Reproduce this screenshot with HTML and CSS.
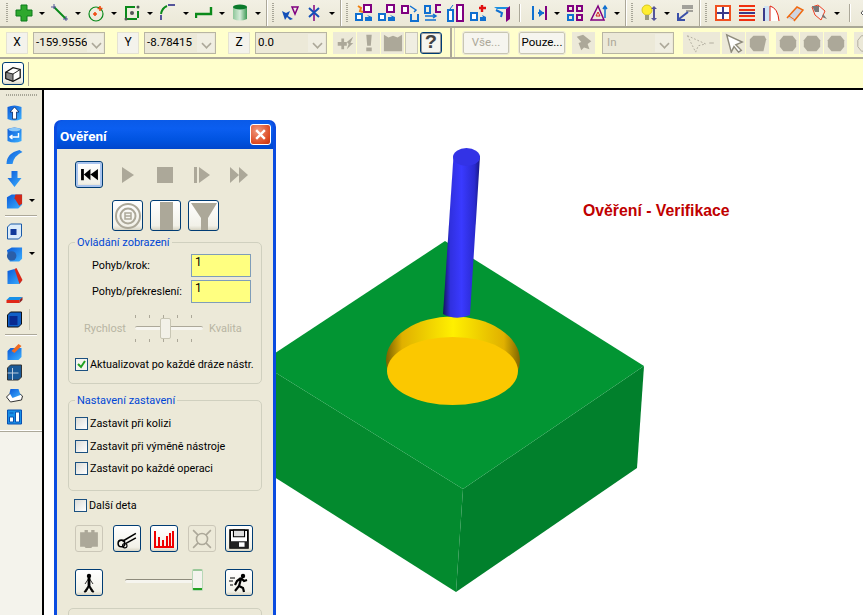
FILE: index.html
```html
<!DOCTYPE html>
<html lang="cs">
<head>
<meta charset="utf-8">
<title>Ověření</title>
<link rel="stylesheet" href="styles.css">
</head>
<body>
<div class="app">
  <div class="bar bar1">
    <span class="grip"></span>
    <span class="tb"><svg viewBox="0 0 18 18"><path d="M6 1h6v5h5v6h-5v5H6v-5H1V6h5z" fill="#2ea82e" stroke="#0b7a1a"/></svg></span><span class="arr"></span>
    <span class="tb"><svg viewBox="0 0 18 18"><path d="M3 3l12 12" stroke="#0a8a1a" stroke-width="2"/><path d="M3 0v5M0 3h5M15 12v5M12 15h5" stroke="#55559a"/></svg></span><span class="arr"></span>
    <span class="tb"><svg viewBox="0 0 18 18"><circle cx="9" cy="10" r="7" fill="none" stroke="#0a8a1a" stroke-width="1.2"/><path d="M8 8v4M6 10h4M13 2v5M10.5 4.500h5" stroke="#f04a10" stroke-width="1.600"/></svg></span><span class="arr"></span>
    <span class="tb"><svg viewBox="0 0 18 18"><path d="M3 2v13h11" fill="none" stroke="#0a8a1a" stroke-width="2"/><path d="M3 3h9M15 7v7" stroke="#0a8a1a" stroke-width="2"/><circle cx="9" cy="9" r="2" fill="#555"/><circle cx="15" cy="3" r="1.500" fill="#555"/><circle cx="3" cy="15" r="1.500" fill="#555"/></svg></span><span class="arr"></span>
    <span class="tb"><svg viewBox="0 0 18 18"><path d="M2 16V11" stroke="#55559a" stroke-width="2"/><path d="M2 10Q3 4 8 2" fill="none" stroke="#0a8a1a" stroke-width="2"/><path d="M9 1h7" stroke="#55559a" stroke-width="2"/></svg></span><span class="arr"></span>
    <span class="tb"><svg viewBox="0 0 18 18"><path d="M1 14v-4h15V3" fill="none" stroke="#0a8a1a" stroke-width="2.400"/></svg></span><span class="arr"></span>
    <span class="tb"><svg viewBox="0 0 18 18"><defs><linearGradient id="cy"><stop offset="0" stop-color="#8fc79a"/><stop offset=".5" stop-color="#d5ebd8"/><stop offset="1" stop-color="#3f9a55"/></linearGradient></defs><path d="M2 3v12q7 3 14 0V3z" fill="url(#cy)"/><ellipse cx="9" cy="3" rx="7" ry="2.500" fill="#0a7a2a"/></svg></span><span class="arr"></span>
    <span class="sep"></span><span class="grip"></span>
    <span class="tb"><svg viewBox="0 0 18 18"><path d="M1 7l4 2 4-2-2 5 5 3-3 1-3-3-2 3z" fill="#1450b8"/><path d="M11 3l6 0-3 7z" fill="none" stroke="#800080" stroke-width="1.500"/></svg></span>
    <span class="tb"><svg viewBox="0 0 18 18"><path d="M9 1v16" stroke="#800080" stroke-width="1.500"/><path d="M4 4l10 9M14 4L4 13" stroke="#1450b8" stroke-width="2"/></svg></span><span class="arr"></span>
    <span class="sep"></span><span class="grip"></span>
    <span class="tb narrow"><svg viewBox="0 0 18 18"><path d="M9 1h7v7H9z" fill="#fff" stroke="#800080" stroke-width="2"/><path d="M1 10h6v6H1z" fill="#fff" stroke="#1070d0" stroke-width="2"/><path d="M3 2l3 2-1 3 3 1" fill="none" stroke="#f08010" stroke-width="2"/><path d="M10 17v-4h4l-2-2 5 2v4" fill="#1070d0"/></svg></span>
    <span class="tb narrow"><svg viewBox="0 0 18 18"><path d="M9 1h7v7H9z" fill="#fff" stroke="#800080" stroke-width="2"/><path d="M1 10h6v6H1z" fill="#fff" stroke="#1070d0" stroke-width="2"/><path d="M10 17v-4h4l-2-2 5 2v4" fill="#1070d0"/></svg></span>
    <span class="tb narrow"><svg viewBox="0 0 18 18"><path d="M1 2h6v7H1z" fill="#fff" stroke="#800080" stroke-width="2"/><path d="M10 10v7h7v-7" fill="none" stroke="#1070d0" stroke-width="2"/><path d="M9 2l6 4-2 2" fill="none" stroke="#1070d0" stroke-width="1.500"/></svg></span>
    <span class="tb narrow"><svg viewBox="0 0 18 18"><path d="M1 2h5v7H1z" fill="none" stroke="#1070d0" stroke-width="2"/><path d="M17 1h-5v7h5" fill="none" stroke="#800080" stroke-width="2"/><path d="M1 12h11M9 10l3 2-3 2M1 16h11" stroke="#1070d0" stroke-width="1.500" fill="none"/></svg></span>
    <span class="tb narrow"><svg viewBox="0 0 18 18"><path d="M1 6h5v11H1z" fill="#fff" stroke="#1070d0" stroke-width="2"/><path d="M10 1h6v16h-6z" fill="#fff" stroke="#800080" stroke-width="2"/><path d="M3 5l3-4" stroke="#1070d0"/></svg></span>
    <span class="tb narrow"><svg viewBox="0 0 18 18"><path d="M1 9h6v7H1z" fill="#fff" stroke="#1070d0" stroke-width="2"/><path d="M12 1v7M9 4h7" stroke="#e01010" stroke-width="2.400"/><path d="M10 17v-4h3l-1-2 4 2v4" fill="#1070d0"/></svg></span>
    <span class="tb narrow"><svg viewBox="0 0 18 18"><path d="M1 3h15l-3 2H4z" fill="#1b8fe0"/><path d="M13 5l4-3v13l-4 3z" fill="#800080"/><path d="M3 6l6 3-1 4" fill="none" stroke="#1070d0" stroke-width="2"/></svg></span>
    <span class="sep dim"></span>
    <span class="tb"><svg viewBox="0 0 18 18"><path d="M3 2v14M8 9H14" stroke="#1070d0" stroke-width="2"/><path d="M9 5l5 4-5 4z" fill="#1070d0"/><path d="M16 2v14" stroke="#800080" stroke-width="2"/></svg></span><span class="arr"></span>
    <span class="tb"><svg viewBox="0 0 18 18"><path d="M2 2h5v5H2z" fill="none" stroke="#800080" stroke-width="2"/><path d="M11 2h5v5h-5z" fill="none" stroke="#800080" stroke-width="2"/><path d="M2 11h5v5H2z" fill="none" stroke="#1070d0" stroke-width="2"/><path d="M11 11h5v5h-5z" fill="none" stroke="#800080" stroke-width="2"/></svg></span>
    <span class="tb"><svg viewBox="0 0 18 18"><path d="M8 2L1 16h13z" fill="none" stroke="#800080" stroke-width="1.500"/><path d="M15 2v12M13 5l2-3 2 3" fill="none" stroke="#1070d0" stroke-width="1.500"/><path d="M6 12h4l-2-4z" fill="none" stroke="#d02020"/></svg></span><span class="arr"></span>
    <span class="sep"></span><span class="grip"></span>
    <span class="tb"><svg viewBox="0 0 18 18"><circle cx="7" cy="6" r="5" fill="#ffee30" stroke="#d8c820"/><path d="M5 11h4v5H5z" fill="#9a9a80"/><path d="M14 2l-3 3h6zM14 17l-3-3h6zM13 5h2v9h-2z" fill="#55559a"/></svg></span><span class="arr"></span>
    <span class="tb"><svg viewBox="0 0 18 18"><path d="M6 2h11M6 4h11M10 7h7" stroke="#555" /><path d="M12 8L3 15M2 9v7h7" fill="none" stroke="#3a50a8" stroke-width="2"/></svg></span>
    <span class="sep"></span><span class="grip"></span>
    <span class="tb"><svg viewBox="0 0 18 18"><path d="M2 2h14v14H2z" fill="#fff" stroke="#f05020" stroke-width="2"/><path d="M3 9h12M9 3v12" stroke="#3a3a8a" stroke-width="2"/></svg></span>
    <span class="tb"><svg viewBox="0 0 18 18"><path d="M1 2h16M1 6h16M1 12h16M1 16h16" stroke="#f03010" stroke-width="2"/><path d="M1 9h16" stroke="#3a3a8a" stroke-width="2"/></svg></span>
    <span class="tb"><svg viewBox="0 0 18 18"><path d="M2 17V2h4q8 2 10 15z" fill="#cfe4f5"/><path d="M8 17V2q8 2 9 15" fill="#fff" stroke="#e02010"/><path d="M2 17V4" stroke="#3a3a8a" stroke-width="2"/></svg></span>
    <span class="tb"><svg viewBox="0 0 18 18"><path d="M1 14L11 3l6 3-9 11" fill="#cfd4e0" stroke="#f06a10" stroke-width="1.500"/><path d="M3 12l6 4" stroke="#f06a10"/></svg></span>
    <span class="tb"><svg viewBox="0 0 18 18"><path d="M2 3l6-2 7 6-4 9-6-5z" fill="#eee" stroke="#f04020"/><path d="M2 2h7v6H5z" fill="#777"/><path d="M13 10l4 5-5-2z" fill="#777"/></svg></span><span class="arr"></span>
    <span class="sep dim"></span>
    <span class="tb"><svg viewBox="0 0 18 18"><path d="M1 9l7-8 8 4v9l-7 3z" fill="#fff" stroke="#555"/><path d="M6 4h8v8H6z" fill="none" stroke="#e02010"/></svg></span>
  </div>

  <div class="bar bar2">
    <span class="coord">X</span><span class="combo"><span class="val">-159.9556</span><span class="drop"></span></span>
    <span class="coord">Y</span><span class="combo"><span class="val">-8.78415</span><span class="drop"></span></span>
    <span class="coord">Z</span><span class="combo"><span class="val">0.0</span><span class="drop"></span></span>
    <span class="gtb g1"><svg viewBox="0 0 22 22"><path d="M7 6v4H3v4h4v4h3v-4h3v-4h-3V6z M13 10l7-6-3 7 3 0-7 7 2-6z" fill="#aca899"/></svg></span>
    <span class="gtb"><svg viewBox="0 0 22 22"><path d="M8 2h6l-1 12H9zM8 16h6v4H8z" fill="#aca899"/></svg></span>
    <span class="gtb wide"><svg viewBox="0 0 22 22"><path d="M1 2l5 3 5-2 5 2 5-3v18H1z" fill="#aca899"/></svg></span><span class="spin"></span>
    <span class="help">?</span>
    <span class="vgrip"></span>
    <span class="pbtn off">Vše...</span>
    <span class="pbtn">Pouze...</span>
    <span class="gtb g2"><svg viewBox="0 0 22 22"><path d="M3 4l7-2 9 7-4 3 2 6-6-2-3 3-3-8 3-1z" fill="#aca899"/></svg></span>
    <span class="combo unit"><span class="val off">In</span><span class="drop"></span></span>
    <span class="gtb pale"><svg viewBox="0 0 36 22"><path d="M2 3l20 9-8 2-3 7z" fill="none" stroke="#aca899" stroke-dasharray="2 2"/><path d="M26 11h5" stroke="#aca899"/></svg></span>
    <span class="gtb"><svg viewBox="0 0 22 22"><path d="M3 2l17 8-7 3 6 6-3 2-5-6-3 6z" fill="#fff" stroke="#8e8b7c" stroke-width="1.600"/></svg></span>
    <span class="gtb"><svg viewBox="0 0 22 22"><path d="M6 3h12l2 4-3 13H6l-4-5V7z" fill="#aca899"/></svg></span>
    <span class="gtb g3"><svg viewBox="0 0 22 22"><path d="M6 3h10l4 5v7l-4 5H6l-4-5V8z" fill="#aca899"/></svg></span>
    <span class="gtb"><svg viewBox="0 0 22 22"><path d="M6 3h10l4 5v7l-4 5H6l-4-5V8z" fill="#aca899"/></svg></span>
    <span class="gtb"><svg viewBox="0 0 22 22"><path d="M6 3h10l4 5v7l-4 5H6l-4-5V8z" fill="#aca899"/></svg></span>
    <span class="gtb g3"><svg viewBox="0 0 22 22"><path d="M6 3h10l4 5v7l-4 5H6l-4-5V8z" fill="none" stroke="#aca899"/></svg></span>
  </div>

  <div class="bar bar3">
    <span class="xpbtn"><svg viewBox="0 0 20 20"><path d="M2 8l8-5 8 2v9l-8 4-8-3z" fill="#fff" stroke="#111" stroke-width="1.400"/><path d="M2 8l8 2v8l-8-3z" fill="#888" stroke="#111"/><path d="M10 10l8-5" stroke="#111"/></svg></span>
    <span class="vline"></span>
  </div>

  <div class="work">
    <aside class="side">
      <div class="sidetools">
        <span class="sgrip"></span>
        <span class="st"><svg viewBox="0 0 16 18"><defs><linearGradient id="sb" x1="0" y1="0" x2="1" y2="1"><stop offset="0" stop-color="#0a58d8"/><stop offset="1" stop-color="#3cb0ff"/></linearGradient></defs><path d="M1 3q7-3 14 0v12q-7 3-14 0z" fill="url(#sb)"/><path d="M8 3l4.500 5H10v7H6V8H3.500z" fill="#fff" stroke="#0a2a60" stroke-width=".8"/></svg></span>
        <span class="st"><svg viewBox="0 0 16 18"><path d="M1 3q7-3 14 0v12q-7 3-14 0z" fill="url(#sb)"/><ellipse cx="8" cy="3.500" rx="6" ry="1.800" fill="#8cc8f8"/><path d="M3 11h9V7M3 11l3-2M3 11l3 2" fill="none" stroke="#fff" stroke-width="1.400"/></svg></span>
        <span class="st"><svg viewBox="0 0 16 18"><path d="M0 16q0-11 13-14l3 2Q7 8 6 16z" fill="url(#sb)"/></svg></span>
        <span class="st"><svg viewBox="0 0 16 18"><path d="M5 1h6v7h4l-7 9-7-9h4z" fill="url(#sb)"/></svg></span>
        <span class="st more"><svg viewBox="0 0 18 18"><path d="M1 5l5-3h11v11l-4 4H1z" fill="url(#sb)"/><path d="M10 2h7v10l-3 2-5-8z" fill="#d02818"/></svg></span>
        <span class="shr"></span>
        <span class="st"><svg viewBox="0 0 16 18"><path d="M1 4l3-3h11v12l-3 3H1z" fill="#dcecfa" stroke="#1a5aa8"/><path d="M4 6h6v6H4z" fill="#123a9a"/></svg></span>
        <span class="st more"><svg viewBox="0 0 18 18"><path d="M1 5l5-3h11v12l-3 3H4z" fill="url(#sb)"/><circle cx="6" cy="11" r="5" fill="#2a5ea8"/></svg></span>
        <span class="st"><svg viewBox="0 0 16 18"><path d="M1 4l7-2 7 12-2 3H1z" fill="url(#sb)"/><path d="M8 2l2-1 6 12-3 4z" fill="#d82818"/></svg></span>
        <span class="st"><svg viewBox="0 0 16 18"><path d="M3 8h13l-3 3H0z" fill="#1890e8"/><path d="M0 11h13v3H0z" fill="#e02818"/><path d="M13 11l3-3v3l-3 3z" fill="#902020"/></svg></span>
        <span class="st flag"><svg viewBox="0 0 16 18"><path d="M1 4l3-3h11v12l-3 3H1z" fill="#1060c8" stroke="#111"/><path d="M3 5h8v9H3z" fill="#082a90"/></svg></span>
        <span class="shr"></span>
        <span class="st"><svg viewBox="0 0 16 18"><path d="M1 9l3-3h11v9l-3 3H1z" fill="url(#sb)"/><path d="M5 9l7-7 3 2-7 7z" fill="#f06a20"/></svg></span>
        <span class="st"><svg viewBox="0 0 16 18"><path d="M1 4l3-3h11v12l-3 3H1z" fill="#1a5a98" stroke="#333"/><path d="M1 9h11M6 4v12" stroke="#bcd" /></svg></span>
        <span class="st"><svg viewBox="0 0 16 18"><path d="M0 11l4 5 11-2 1-4-5-4-7 1z" fill="#fff" stroke="#333"/><path d="M4 3h8l2 6-8 3-3-5z" fill="url(#sb)"/></svg></span>
        <span class="st"><svg viewBox="0 0 16 18"><path d="M1 2h14v14H1z" fill="#1890e8" stroke="#0a50b0"/><path d="M3 9h4v5H3zM3 5h4M9 4h4v10H9z" fill="#fff" stroke="#0a50b0"/></svg></span>
      </div>
    </aside>
    <main class="canvas">
      <svg class="model" viewBox="44 90 819 525" preserveAspectRatio="none">
        <defs>
          <linearGradient id="wall" x1="0" x2="1">
            <stop offset="0" stop-color="#7a6200"/><stop offset=".12" stop-color="#e0b000"/><stop offset=".5" stop-color="#fff000"/><stop offset=".88" stop-color="#e0b000"/><stop offset="1" stop-color="#806600"/>
          </linearGradient>
          <linearGradient id="tool" x1="0" x2="1">
            <stop offset="0" stop-color="#14145a"/><stop offset=".2" stop-color="#3030e0"/><stop offset=".5" stop-color="#3a3aff"/><stop offset=".85" stop-color="#2a2ad0"/><stop offset="1" stop-color="#181880"/>
          </linearGradient>
          <clipPath id="upper"><path d="M380 310H526V374H380z"/></clipPath>
        </defs>
        <path d="M463 489L456 592 260 468V363z" fill="#038a2e"/>
        <path d="M463 489L644 366 637 468 456 592z" fill="#01802c"/>
        <path d="M445 241L644 366 463 489 260 363z" fill="#029533"/>
        <ellipse cx="453" cy="360.500" rx="67" ry="44" fill="url(#wall)" clip-path="url(#upper)"/>
        <ellipse cx="452.500" cy="371" rx="65.500" ry="34" fill="#fbc800"/>
        <path d="M453.500 156L480 156 470 315Q456 321 443 314z" fill="url(#tool)"/>
        <ellipse cx="466.500" cy="157" rx="13.500" ry="9" fill="#3333e6"/>
      </svg>
      <p class="note">Ověření - Verifikace</p>
      <section class="dlg">
        <header class="dlg-title"><span>Ověření</span><span class="close"><svg viewBox="0 0 12 12"><path d="M2 2l8 8M10 2l-8 8" stroke="#fff" stroke-width="2.200"/></svg></span></header>
        <div class="dlg-body">
          <div class="play">
            <span class="xpbtn hot big"><svg viewBox="0 0 20 16"><path d="M1 2h3v12H1zM11 2v12L4 8zM19 2v12l-8-6z" fill="#000"/></svg></span>
            <span class="pl"><svg viewBox="0 0 20 20"><path d="M4 2l12 8-12 8z" fill="#aca899"/></svg></span>
            <span class="pl"><svg viewBox="0 0 20 20"><path d="M2 2h16v16H2z" fill="#aca899"/></svg></span>
            <span class="pl"><svg viewBox="0 0 20 20"><path d="M2 2h3v16H2zM7 2l11 8-11 8z" fill="#aca899"/></svg></span>
            <span class="pl"><svg viewBox="0 0 20 20"><path d="M1 2l9 8-9 8zM10 2l9 8-9 8z" fill="#aca899"/></svg></span>
          </div>
          <div class="modes">
            <span class="xpbtn sq"><svg viewBox="0 0 28 28"><circle cx="14" cy="14" r="12" fill="none" stroke="#aca899" stroke-width="2"/><circle cx="14" cy="14" r="7.500" fill="none" stroke="#aca899" stroke-width="2"/><path d="M11 11h6v6h-6zM11 14h6" fill="none" stroke="#aca899" stroke-width="1.500"/></svg></span>
            <span class="xpbtn sq"><svg viewBox="0 0 28 28"><path d="M8 0h13v28H8z" fill="#aca899"/></svg></span>
            <span class="xpbtn sq"><svg viewBox="0 0 28 28"><path d="M1 1h26L18 16v12h-7V16z" fill="#aca899"/></svg></span>
          </div>
          <fieldset class="grp g-view">
            <legend>Ovládání zobrazení</legend>
            <div class="fld"><label>Pohyb/krok:</label><span class="inp">1</span></div>
            <div class="fld f2"><label>Pohyb/překreslení:</label><span class="inp">1</span></div>
            <div class="quality">
              <span class="ql">Rychlost</span>
              <span class="slider"><i class="track"></i><i class="thumb"></i></span>
              <span class="ql">Kvalita</span>
            </div>
            <div class="chk on-row"><span class="box on"><svg viewBox="0 0 11 11"><path d="M2 5l3 3 4-6" fill="none" stroke="#21a121" stroke-width="2"/></svg></span>Aktualizovat po každé dráze nástr.</div>
          </fieldset>
          <fieldset class="grp g-stop">
            <legend>Nastavení zastavení</legend>
            <div class="chk"><span class="box"></span>Zastavit při kolizi</div>
            <div class="chk"><span class="box"></span>Zastavit při výměně nástroje</div>
            <div class="chk"><span class="box"></span>Zastavit po každé operaci</div>
          </fieldset>
          <div class="chk more-row"><span class="box"></span><span>Další deta</span></div>
          <div class="tools">
            <span class="xpbtn wide-b dis"><svg viewBox="0 0 18 18"><path d="M1 3h4V1h3v2h3V1h3v2h3v13h-5l-1 1H6l-1-1H1z" fill="#aca899"/></svg></span>
            <span class="xpbtn wide-b"><svg viewBox="0 0 18 18"><circle cx="4" cy="13" r="3" fill="none" stroke="#000" stroke-width="1.400"/><circle cx="7" cy="15" r="2" fill="none" stroke="#000"/><path d="M5 11L17 4M8 13L17 8" stroke="#000" stroke-width="1.400"/></svg></span>
            <span class="xpbtn wide-b"><svg viewBox="0 0 20 20"><path d="M1 2v16h18V2M5 18V8M9 18V11M13 18V7M16 18V4" fill="none" stroke="#f00000" stroke-width="2"/></svg></span>
            <span class="xpbtn wide-b dis"><svg viewBox="0 0 18 18"><path d="M1 1l16 16M17 1L1 17" stroke="#aca899" stroke-width="1.400"/><circle cx="9" cy="9" r="5" fill="#ece9d8" stroke="#aca899" stroke-width="1.400"/></svg></span>
            <span class="xpbtn wide-b"><svg viewBox="0 0 18 18"><path d="M1 1h16v16H1z" fill="#fff" stroke="#000" stroke-width="1.600"/><path d="M4 1h10v6H4z" fill="#ddd" stroke="#000"/><path d="M1 11h16v6H1z" fill="#222"/><path d="M9 12h5v4H9z" fill="#fff"/></svg></span>
          </div>
          <div class="anim">
            <span class="xpbtn wide-b"><svg viewBox="0 0 18 20"><circle cx="9" cy="3" r="2.200" fill="#000"/><path d="M9 5L5 11M9 5l4 6M8 5h2v8l4 6h-2l-3-5-3 5H4l4-6z" fill="#000" stroke="#000" stroke-width=".8"/></svg></span>
            <span class="speed"><i class="strack"></i><i class="sthumb"></i></span>
            <span class="xpbtn wide-b"><svg viewBox="0 0 20 20"><circle cx="14" cy="3" r="2.200" fill="#000"/><path d="M12 5l-4 3-2 4M12 5l3 3 3-1M12 6l-2 7-4 5M10 13l4 2 1 4" fill="none" stroke="#000" stroke-width="2.200"/><path d="M1 5h5M0 8h4M1 12h3" stroke="#000"/></svg></span>
          </div>
          <div class="grp-stub"></div>
        </div>
      </section>
    </main>
  </div>
</div>
</body>
</html>
```
FILE: styles.css
```css
* { box-sizing: border-box; }
html, body { margin: 0; height: 100%; overflow: hidden; background: #fff; }
body { font: 10.800px/13px Roboto, "Liberation Sans", sans-serif; color: #000; }
.app { width: 863px; height: 615px; display: flex; flex-direction: column; overflow: hidden; }

.bar { display: flex; align-items: center; flex: none; white-space: nowrap; overflow: hidden; }
.bar1 { height: 28px; background: linear-gradient(#f2f0e4, #ebe8d7); border-bottom: 2px solid #a9a795; padding-left: 6px; }
.bar2 { height: 31px; background: #ffffcc; border-bottom: 2px solid #aca899; padding-left: 6px; }
.bar3 { height: 31px; background: #ffffcc; border-bottom: 2px solid #000; padding-left: 2px; }

.grip { width: 2px; height: 20px; flex: none; margin-right: 4px; background: repeating-linear-gradient(#a8a698 0 1px, transparent 1px 2px); }
.sep { width: 2px; height: 28px; flex: none; margin: 0 4px 0 2px; background: #fff; border-left: 1px solid #aca899; }
.sep.dim { height: 18px; margin: 0 6px; }
.tb { width: 24px; height: 24px; flex: none; display: flex; align-items: center; justify-content: center; }
.tb.narrow { width: 23px; }
.tb svg { width: 18px; height: 18px; }
.arr { width: 12px; height: 24px; flex: none; display: flex; align-items: center; justify-content: center; }
.arr::after { content: ""; border: 3px solid transparent; border-top: 3px solid #000; border-bottom: 0; }

.coord { width: 22px; height: 22px; flex: none; display: flex; align-items: center; justify-content: center; background: #f4f3ec; border: 1px solid #e4e2d2; font-size: 12px; }
.coord + .combo { margin-left: 5px; }
.combo { width: 72px; height: 22px; flex: none; margin-right: 12px; display: flex; align-items: center; background: #ece9d8; border: 1px solid #b8b5a3; padding-left: 2px; }
.val { flex: 1; font-size: 11.500px; }
.val.off { color: #aca899; padding-left: 2px; }
.drop { width: 17px; height: 18px; margin-right: 1px; background: #f0eee2; position: relative; }
.drop::after { content: ""; position: absolute; left: 5px; top: 6px; width: 7px; height: 7px; border-right: 2px solid #aca899; border-bottom: 2px solid #aca899; transform: scale(.8) translateY(-1px) rotate(45deg); }
.gtb { width: 23px; height: 22px; flex: none; display: flex; align-items: center; justify-content: center; background: #ece9d8; margin-right: 1px; }
.gtb svg { width: 20px; height: 20px; }
.gtb.g1 { margin-left: -6px; }
.gtb.g2 { margin-left: -3px; margin-right: 7px; }
.gtb.g3 { margin-left: 6px; }
.gtb.pale { width: 37px; margin-right: 2px; }
.gtb.pale svg { width: 36px; }
.spin { width: 13px; height: 22px; flex: none; margin-right: 2px; background: #f0eee2; border: 1px solid #c9c7b6; }
.help { width: 22px; height: 22px; flex: none; margin-right: 8px; display: flex; align-items: center; justify-content: center; background: #f6f5ef; border: 1px solid #003c74; border-radius: 3px; font: 700 20px/20px "Liberation Mono", monospace; color: #444; box-shadow: inset 0 0 0 1px #999; }
.vgrip { width: 5px; height: 29px; flex: none; margin-right: 8px; border-left: 2px solid #aca899; border-right: 1px solid #d8d6c4; }
.pbtn { width: 46px; height: 22px; flex: none; margin-right: 10px; display: flex; align-items: center; justify-content: center; background: #f6f5ef; border: 1px solid #c8c6b4; border-radius: 2px; outline: 1px solid #ece9d8; font-size: 11.500px; }
.pbtn.off { color: #aca899; }
.unit { margin-right: 9px; }

.xpbtn { flex: none; display: flex; align-items: center; justify-content: center; background: linear-gradient(#fff, #f2f1e8 85%, #d8d5c4); border: 1px solid #003c74; border-radius: 3px; }
.bar3 .xpbtn { width: 22px; height: 23px; }
.bar3 .xpbtn svg { width: 18px; height: 18px; }
.vline { width: 1px; height: 24px; margin-left: 4px; background: #aca899; }

.work { flex: 1; min-height: 0; display: flex; }
.side { width: 44px; flex: none; background: #f4f3ec; border-right: 2px solid #000; }
.sidetools { height: 341px; display: flex; flex-direction: column; align-items: flex-start; background: #ece9d8; border-bottom: 1px solid #fff; box-shadow: 0 1px 0 #aca899; }
.sgrip { width: 32px; height: 2px; margin: 4px 0 6px 6px; flex: none; background: repeating-linear-gradient(90deg, #a8a698 0 1px, transparent 1px 2px); }
.st { width: 42px; height: 22px; flex: none; padding-left: 6px; display: flex; align-items: center; position: relative; }
.st svg { width: 17px; height: 18px; }
.st.more::after { content: ""; position: absolute; left: 29px; top: 9px; border: 3px solid transparent; border-top: 3px solid #000; border-bottom: 0; }
.st.flag::after { content: ""; position: absolute; left: 29px; top: 0; width: 1px; height: 21px; background: #c8c6b4; }
.shr { width: 32px; height: 2px; flex: none; margin: 3px 0 4px 5px; background: #aca899; border-bottom: 1px solid #fff; }

.canvas { flex: 1; position: relative; background: #fff; overflow: hidden; }
.model { position: absolute; inset: 0; width: 100%; height: 100%; }
.note { position: absolute; left: 539px; top: 113px; margin: 0; font: 700 15.800px/16px "Liberation Sans", sans-serif; color: #c00000; }

.dlg { position: absolute; left: 10px; top: 30px; width: 222px; height: 520px; background: #0a4be0; border-radius: 7px 7px 0 0; padding: 0 3px; display: flex; flex-direction: column; }
.dlg-title { height: 29px; flex: none; display: flex; align-items: center; justify-content: space-between; padding: 2px 2px 0 3px; background: linear-gradient(#0a5ae8, #0b5ef0 30%, #0053e0 70%, #0046cc); border-radius: 7px 7px 0 0; color: #fff; font: 700 13.500px/16px Roboto, "Liberation Sans", sans-serif; }
.close { width: 21px; height: 21px; margin-top: -2px; display: flex; align-items: center; justify-content: center; background: radial-gradient(circle at 35% 30%, #f09a80, #dd4a22 70%, #c03010); border: 1px solid #fff; border-radius: 3px; }
.close svg { width: 13px; height: 13px; }
.dlg-body { flex: 1; background: #ece9d8; padding: 12px 0 0 11px; display: flex; flex-direction: column; }

.play { display: flex; align-items: center; height: 27px; margin-left: 7px; }
.hot.big { width: 28px; height: 27px; box-shadow: inset 0 0 0 2px #a9c4ee; }
.hot.big svg { width: 19px; height: 15px; }
.pl { width: 37px; display: flex; justify-content: center; }
.big + .pl { margin-left: 6px; }
.pl svg { width: 20px; height: 20px; }
.modes { display: flex; gap: 7px; margin: 12px 0 0 44px; }
.sq { width: 31px; height: 31px; }
.sq svg { width: 28px; height: 28px; }

.grp { position: relative; width: 194px; min-width: 0; margin: 0; padding: 0 0 0 6px; border: 1px solid #d0d0bf; border-radius: 5px; }
.grp legend { margin-left: 0; padding: 0 2px; color: #0046d5; font-size: 11px; line-height: 13px; }
.g-view { height: 148px; margin-top: 5px; padding-top: 5px; }
.fld { display: flex; align-items: center; height: 23px; padding-left: 17px; }
.f2 { margin-top: 3px; }
.fld label { flex: 1; }
.inp { width: 60px; height: 23px; margin-right: 10px; padding-left: 3px; background: #ffff80; border: 1px solid #7f9db9; font-size: 12px; line-height: 14px; }
.quality { display: flex; align-items: center; height: 30px; margin: 10px 0 0 9px; color: #b8b5a3; }
.ql { font-size: 11px; width: 42px; }
.ql:last-child { margin-left: 6px; }
.slider { position: relative; width: 70px; height: 30px; margin-left: 7px; background: repeating-linear-gradient(90deg, #aca899 0 1px, transparent 1px 14px) 2px 2px / 100% 3px no-repeat, repeating-linear-gradient(90deg, #aca899 0 1px, transparent 1px 14px) 2px 26px / 100% 3px no-repeat; }
.track { position: absolute; left: 2px; right: 0; top: 13px; height: 4px; background: #f6f5ef; border-top: 1px solid #aca899; border-radius: 2px; }
.thumb { position: absolute; left: 27px; top: 5px; width: 11px; height: 21px; background: #f2f1e8; border: 1px solid #c8c6b4; border-radius: 2px; }
.chk { display: flex; align-items: center; height: 15px; gap: 2px; white-space: nowrap; }
.box { width: 13px; height: 13px; flex: none; background: linear-gradient(135deg, #dcdcd7, #fff); border: 1px solid #1c5180; display: flex; }
.box.on { background: #f4f3ee; }
.on-row { margin-top: 14px; }
.g-stop { height: 97px; margin-top: 10px; padding-top: 9px; }
.g-stop .chk { margin-bottom: 7.500px; }
.more-row { margin: 7px 0 0 6px; }
.tools { display: flex; gap: 9.500px; margin: 12px 0 0 7px; }
.wide-b { width: 28px; height: 27px; }
.wide-b svg { width: 20px; height: 20px; }
.dis { background: #ece9d8; border-color: #cbc7b8; }
.anim { display: flex; align-items: center; margin: 17px 0 0 7px; }
.speed { position: relative; width: 122px; height: 27px; }
.strack { position: absolute; left: 22px; right: 25px; top: 10px; height: 4px; background: #f6f5ef; border-top: 1px solid #8e8b7c; border-radius: 2px; }
.sthumb { position: absolute; left: 89px; top: 0; width: 11px; height: 22px; background: linear-gradient(#f4f3ee 88%, #21a121 88%); border: 1px solid #b8d8b8; border-top: 2px solid #9ac89a; border-radius: 2px; }
.grp-stub { width: 194px; height: 20px; flex: none; margin-top: 12px; border: 1px solid #d0d0bf; border-radius: 5px; }
```
